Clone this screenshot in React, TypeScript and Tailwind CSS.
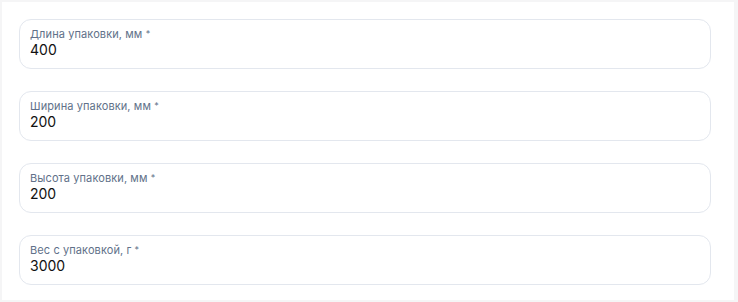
const fields = [
  { label: "Длина упаковки, мм", value: "400" },
  { label: "Ширина упаковки, мм", value: "200" },
  { label: "Высота упаковки, мм", value: "200" },
  { label: "Вес с упаковкой, г", value: "3000" },
];

export default function App() {
  return (
    <div className="w-[738px] h-[302px] bg-[#f5f5f6] p-[2px] pr-[4px]" style={{ fontFamily: "Inter, 'Noto Sans', sans-serif" }}>
      <div className="h-full bg-white pl-[17px] pr-[23px] pt-[17px] flex flex-col gap-[22px]">
        {fields.map((f) => (
          <div key={f.label} className="h-[50px] rounded-[12px] border border-[#e3e7ee] pl-[10px] pt-[7px]">
            <div className="text-[11px] leading-[14px] text-[#617189] tracking-[0.1px]">
              {f.label} <span className="align-top text-[9px]">*</span>
            </div>
            <div className="text-[14px] leading-[18px] text-[#111]">{f.value}</div>
          </div>
        ))}
      </div>
    </div>
  );
}
